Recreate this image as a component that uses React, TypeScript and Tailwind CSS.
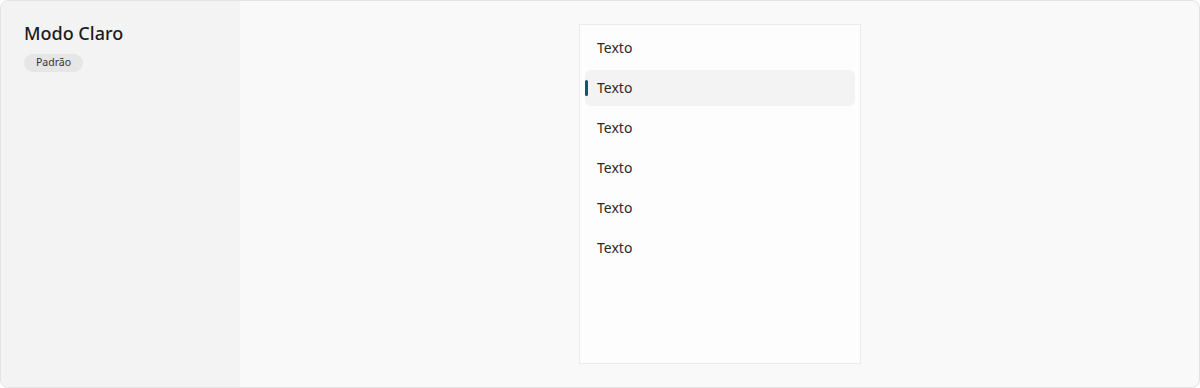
import React from "react";

export default function App() {
  const items = ["Texto", "Texto", "Texto", "Texto", "Texto", "Texto"];
  return (
    <div
      className="w-[1200px] h-[388px] flex overflow-hidden rounded-lg border border-[#e3e3e3] bg-[#f9f9f9] text-[#1f1f1f]"
      style={{ fontFamily: '"Noto Sans", "Open Sans", sans-serif' }}
    >
      <div className="w-[239px] shrink-0 bg-[#f3f3f3] px-[23px] pt-[19px]">
        <h1 className="text-[18px] leading-[26px] font-medium text-[#1c1c1c]">Modo Claro</h1>
        <div className="mt-[8px] inline-flex h-[18px] items-center rounded-full bg-[#e6e6e6] px-[12px] text-[10.5px] text-[#333]">
          Padrão
        </div>
      </div>
      <div className="flex-1 flex justify-center py-[23px]">
        <div className="w-[282px] h-[340px] border border-[#ebebeb] bg-[#fdfdfd] p-[5px] flex flex-col gap-1">
          {items.map((t, i) => {
            const sel = i === 1;
            return (
              <div
                key={i}
                className={`relative h-9 shrink-0 flex items-center pl-[12.5px] pr-3 pb-[2px] rounded-md text-[14px] text-[#2b2b2b] ${sel ? "bg-[#f3f3f3]" : ""}`}
              >
                {sel && (
                  <span className="absolute left-0 top-[10px] h-4 w-[3px] rounded-full bg-[#0b5a66]" />
                )}
                {t}
              </div>
            );
          })}
        </div>
      </div>
    </div>
  );
}
